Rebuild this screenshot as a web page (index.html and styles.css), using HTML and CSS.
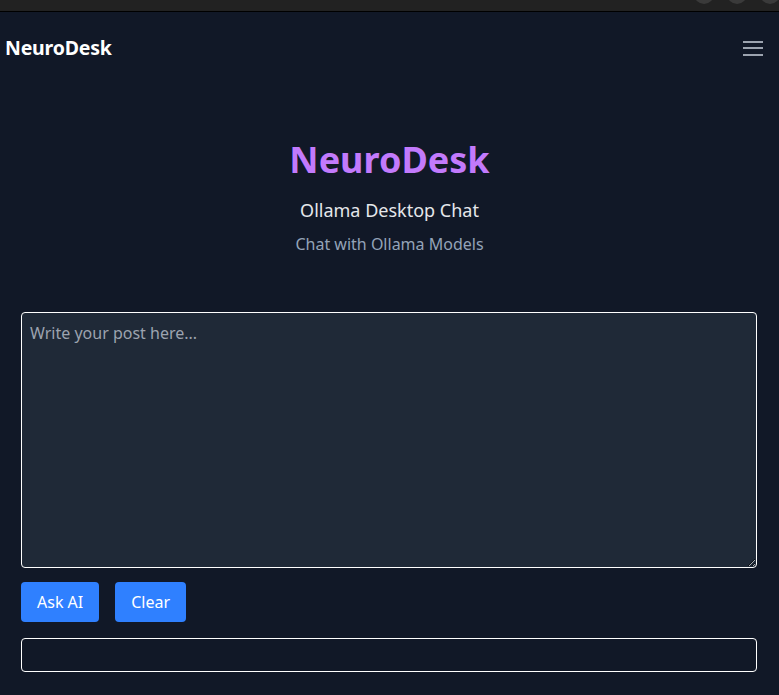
FILE: index.html
```html
<!DOCTYPE html>
<html lang="en">
<head>
<meta charset="utf-8">
<title>NeuroDesk</title>
<link rel="stylesheet" href="styles.css">
</head>
<body>
<div class="chrome">
  <span class="dot"></span><span class="dot"></span><span class="dot"></span>
</div>
<nav class="nav">
  <span class="brand">NeuroDesk</span>
  <button class="menu" aria-label="Menu">
    <svg width="20" height="16" viewBox="0 0 20 16"><rect x="0" y="1" width="20" height="2" fill="#9ca3af"/><rect x="0" y="7" width="20" height="2" fill="#9ca3af"/><rect x="0" y="14" width="20" height="2" fill="#9ca3af"/></svg>
  </button>
</nav>
<header class="hero">
  <h1 class="title">NeuroDesk</h1>
  <p class="subtitle">Ollama Desktop Chat</p>
  <p class="tagline">Chat with Ollama Models</p>
</header>
<main class="main">
  <textarea class="post" placeholder="Write your post here..."></textarea>
  <div class="actions">
    <button class="btn">Ask AI</button>
    <button class="btn">Clear</button>
  </div>
  <div class="output"></div>
</main>
</body>
</html>
```
FILE: styles.css
```css
* { box-sizing: border-box; }
html, body {
  margin: 0;
  background: #111827;
  font-family: "Noto Sans", "Open Sans", sans-serif;
  color: #e5e7eb;
}
.chrome {
  height: 12px;
  background: #222222;
  border-bottom: 1px solid #000;
  display: flex;
  justify-content: flex-end;
  gap: 13px;
  overflow: hidden;
}
.dot {
  width: 20px;
  height: 20px;
  border-radius: 50%;
  background: #3a3a3a;
  margin-top: -16px;
  flex: none;
}
.dot:last-child { margin-right: -1px; }
.nav {
  height: 71px;
  display: flex;
  align-items: center;
  justify-content: space-between;
  padding: 0 16px 0 5px;
}
.brand {
  font-size: 19.5px;
  font-weight: 700;
  color: #ffffff;
  letter-spacing: -0.2px;
}
.menu {
  background: none;
  border: 0;
  padding: 0;
  display: flex;
}
.hero {
  text-align: center;
  padding-top: 55px;
}
.title {
  margin: 0;
  font-size: 36px;
  line-height: 44px;
  font-weight: 700;
  color: #c27afc;
}
.subtitle {
  margin: 14px 0 0;
  font-size: 18px;
  line-height: 28px;
  color: #e5e7eb;
}
.tagline {
  margin: 8px 0 0;
  font-size: 16px;
  line-height: 24px;
  color: #94a3b8;
}
.main {
  padding: 56px 22px 0 21px;
}
.post {
  display: block;
  width: 100%;
  height: 256px;
  background: #1f2937;
  border: 1px solid #ffffff;
  border-radius: 4px;
  padding: 9px 8px;
  font-family: inherit;
  font-size: 16px;
  color: #e5e7eb;
  resize: vertical;
  outline: none;
}
.post::placeholder { color: #9ca3af; }
.actions {
  display: flex;
  gap: 16px;
  margin-top: 14px;
}
.btn {
  height: 40px;
  padding: 0 16px;
  background: #2f80ff;
  border: 0;
  border-radius: 4px;
  color: #ffffff;
  font-family: inherit;
  font-size: 16px;
}
.output {
  margin-top: 16px;
  height: 34px;
  border: 1px solid #ffffff;
  border-radius: 4px;
}
```
